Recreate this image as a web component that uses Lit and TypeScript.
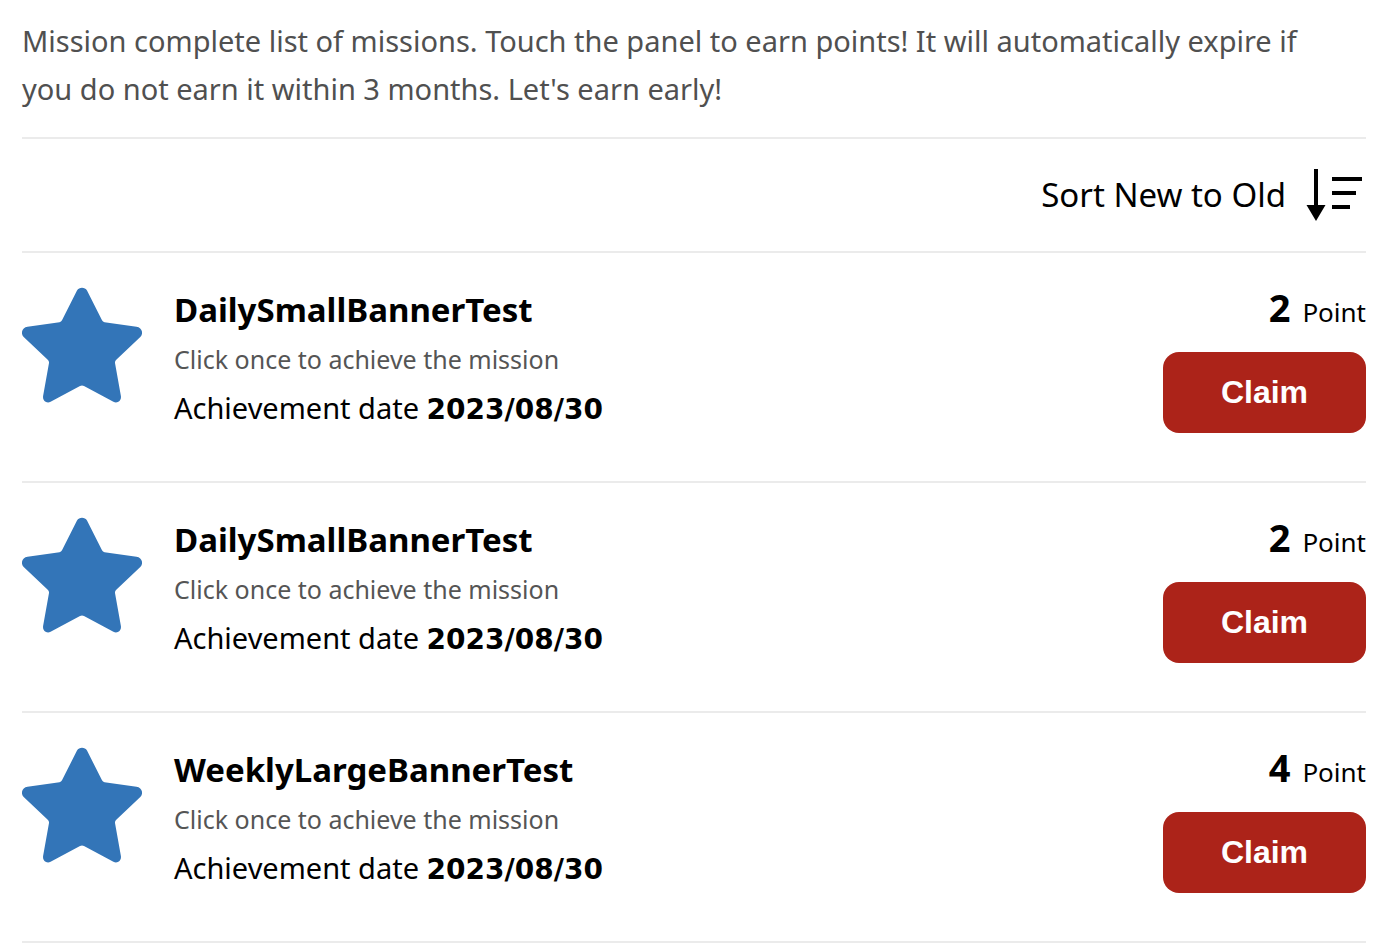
import { LitElement, html, css } from "lit";
import { customElement, property, state } from "lit/decorators.js";

interface Mission {
  title: string;
  description: string;
  date: string;
  points: number;
}

@customElement("mission-item")
class MissionItem extends LitElement {
  static styles = css`
    :host {
      display: flex;
      gap: 32px;
      align-items: flex-start;
      padding: 34px 0 48px;
      border-bottom: 2px solid #ebebeb;
    }
    .star {
      flex: none;
      width: 120px;
      height: 116px;
      fill: #3375b8;
    }
    .details {
      flex: 1;
      min-width: 0;
    }
    .title {
      margin: 0;
      font-size: 33px;
      line-height: 46px;
      font-weight: 700;
    }
    .description {
      margin: 0;
      font-size: 25px;
      line-height: 52px;
      color: #555;
    }
    .date {
      margin: 0;
      font-size: 29px;
      line-height: 46px;
    }
    .day {
      font-family: "DejaVu Sans", Verdana, sans-serif;
      font-size: 28px;
    }
    .reward {
      flex: none;
      display: flex;
      flex-direction: column;
      align-items: flex-end;
      gap: 20px;
    }
    .points {
      margin: 0;
      display: flex;
      align-items: baseline;
      gap: 12px;
      font-size: 26px;
      line-height: 40px;
    }
    .amount {
      font-size: 38px;
    }
    .claim {
      min-width: 203px;
      padding: 20px 56px;
      border: 0;
      border-radius: 16px;
      background: #ac2319;
      color: #fff;
      font: 700 32px/41px "Liberation Sans", Arial, sans-serif;
      cursor: pointer;
    }
  `;

  @property({ attribute: false }) mission!: Mission;

  render() {
    const m = this.mission;
    return html`
      <svg class="star" viewBox="0 0 120 116" aria-hidden="true">
        <path
          d="M55 3.500C57 -.3 63 -.3 65 3.500L80 33.300Q80.800 34.900 82.500 35.200L114.500 39.700C119.500 40.400 122 46 118.300 50L94 73Q92.800 74.200 93 76L98.900 109C99.600 113.800 95.400 116.800 91.400 114.800L62 99Q60 97.900 58 99L28.600 114.800C24.600 116.800 20.400 113.800 21.100 109L27 76Q27.200 74.200 26 73L1.700 50C-2 46 .5 40.400 5.500 39.700L37.500 35.200Q39.200 34.900 40 33.300Z"
        />
      </svg>
      <div class="details">
        <h2 class="title">${m.title}</h2>
        <p class="description">${m.description}</p>
        <p class="date">Achievement date <strong class="day">${m.date}</strong></p>
      </div>
      <div class="reward">
        <p class="points"><strong class="amount">${m.points}</strong><span>Point</span></p>
        <button class="claim" type="button">Claim</button>
      </div>
    `;
  }
}

@customElement("app-root")
class AppRoot extends LitElement {
  static styles = css`
    :host {
      display: block;
      padding: 17px 22px 0;
      background: #fff;
      color: #000;
      font-family: "Noto Sans", "Open Sans", sans-serif;
    }
    .intro {
      margin: 0;
      padding: 0 32px 24px 0;
      border-bottom: 2px solid #ebebeb;
      font-size: 29px;
      line-height: 48px;
      color: #505050;
    }
    .toolbar {
      display: flex;
      justify-content: flex-end;
      padding: 28px 4px 28px 0;
      border-bottom: 2px solid #ebebeb;
    }
    .sort {
      display: flex;
      align-items: center;
      gap: 20px;
      padding: 0;
      border: 0;
      background: none;
      color: inherit;
      font: inherit;
      font-size: 33px;
      line-height: 56px;
      cursor: pointer;
    }
    .sort-icon {
      width: 56px;
      height: 54px;
    }
  `;

  @state() private missions: Mission[] = [
    {
      title: "DailySmallBannerTest",
      description: "Click once to achieve the mission",
      date: "2023/08/30",
      points: 2,
    },
    {
      title: "DailySmallBannerTest",
      description: "Click once to achieve the mission",
      date: "2023/08/30",
      points: 2,
    },
    {
      title: "WeeklyLargeBannerTest",
      description: "Click once to achieve the mission",
      date: "2023/08/30",
      points: 4,
    },
  ];

  render() {
    return html`
      <p class="intro">
        Mission complete list of missions. Touch the panel to earn points! It will automatically expire if
        you do not earn it within 3 months. Let's earn early!
      </p>
      <div class="toolbar">
        <button class="sort" type="button">
          <span>Sort New to Old</span>
          <svg class="sort-icon" viewBox="0 0 56 54" aria-hidden="true">
            <path d="M8 1h4v36h7.500L10 53L.5 37H8zM26 9h30v4H26zM26 23h24v4H26zM26 37h18v4H26z" />
          </svg>
        </button>
      </div>
      ${this.missions.map((m) => html`<mission-item .mission=${m}></mission-item>`)}
    `;
  }
}
